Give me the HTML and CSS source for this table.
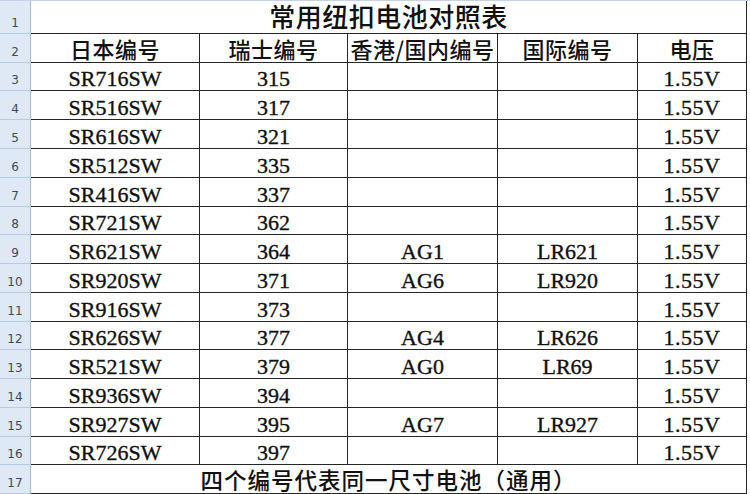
FILE: index.html
```html
<!DOCTYPE html>
<html lang="zh-CN">
<head>
<meta charset="utf-8">
<title>常用纽扣电池对照表</title>
<link rel="stylesheet" href="styles.css">
</head>
<body>
<div class="sheet">
  <div class="grid">
    <div class="rh">1</div>
    <div class="cell title wide">常用纽扣电池对照表</div>

    <div class="rh">2</div>
    <div class="cell hd">日本编号</div>
    <div class="cell hd">瑞士编号</div>
    <div class="cell hd">香港/国内编号</div>
    <div class="cell hd">国际编号</div>
    <div class="cell hd">电压</div>

    <div class="rh">3</div>
    <div class="cell">SR716SW</div><div class="cell">315</div><div class="cell"></div><div class="cell"></div><div class="cell v">1.55V</div>
    <div class="rh">4</div>
    <div class="cell">SR516SW</div><div class="cell">317</div><div class="cell"></div><div class="cell"></div><div class="cell v">1.55V</div>
    <div class="rh">5</div>
    <div class="cell">SR616SW</div><div class="cell">321</div><div class="cell"></div><div class="cell"></div><div class="cell v">1.55V</div>
    <div class="rh">6</div>
    <div class="cell">SR512SW</div><div class="cell">335</div><div class="cell"></div><div class="cell"></div><div class="cell v">1.55V</div>
    <div class="rh">7</div>
    <div class="cell">SR416SW</div><div class="cell">337</div><div class="cell"></div><div class="cell"></div><div class="cell v">1.55V</div>
    <div class="rh">8</div>
    <div class="cell">SR721SW</div><div class="cell">362</div><div class="cell"></div><div class="cell"></div><div class="cell v">1.55V</div>
    <div class="rh">9</div>
    <div class="cell">SR621SW</div><div class="cell">364</div><div class="cell">AG1</div><div class="cell">LR621</div><div class="cell v">1.55V</div>
    <div class="rh">10</div>
    <div class="cell">SR920SW</div><div class="cell">371</div><div class="cell">AG6</div><div class="cell">LR920</div><div class="cell v">1.55V</div>
    <div class="rh">11</div>
    <div class="cell">SR916SW</div><div class="cell">373</div><div class="cell"></div><div class="cell"></div><div class="cell v">1.55V</div>
    <div class="rh">12</div>
    <div class="cell">SR626SW</div><div class="cell">377</div><div class="cell">AG4</div><div class="cell">LR626</div><div class="cell v">1.55V</div>
    <div class="rh">13</div>
    <div class="cell">SR521SW</div><div class="cell">379</div><div class="cell">AG0</div><div class="cell">LR69</div><div class="cell v">1.55V</div>
    <div class="rh">14</div>
    <div class="cell">SR936SW</div><div class="cell">394</div><div class="cell"></div><div class="cell"></div><div class="cell v">1.55V</div>
    <div class="rh">15</div>
    <div class="cell">SR927SW</div><div class="cell">395</div><div class="cell">AG7</div><div class="cell">LR927</div><div class="cell v">1.55V</div>
    <div class="rh">16</div>
    <div class="cell">SR726SW</div><div class="cell">397</div><div class="cell"></div><div class="cell"></div><div class="cell v">1.55V</div>

    <div class="rh">17</div>
    <div class="cell foot wide">四个编号代表同一尺寸电池（通用）</div>
  </div>
</div>
</body>
</html>
```

FILE: styles.css
```css
html, body {
  margin: 0;
  padding: 0;
  background: #ffffff;
}

.sheet {
  width: 750px;
  height: 494px;
  box-sizing: border-box;
  border-top: 1px solid #c3d2e6;
  overflow: hidden;
}

.grid {
  display: grid;
  grid-template-columns: 31px 169px 148px 150px 140px 109px;
  grid-template-rows: 33px 29px 28px 29px 29px 29px 29px 28px 29px 29px 29px 28px 29px 29px 29px 28px 29px;
}

.rh {
  box-sizing: border-box;
  background: #dfe8f5;
  border-right: 1px solid #a7bcd6;
  border-bottom: 1px solid #b9cbe2;
  display: flex;
  align-items: flex-end;
  justify-content: center;
  padding-bottom: 4px;
  font-family: "DejaVu Sans", "Liberation Sans", sans-serif;
  font-size: 12px;
  line-height: 1;
  color: #3f4a57;
}

.cell {
  box-sizing: border-box;
  border-right: 1px solid #262626;
  border-bottom: 1px solid #262626;
  display: flex;
  align-items: flex-end;
  justify-content: center;
  white-space: nowrap;
  font-family: "Liberation Serif", "Noto Sans CJK SC", serif;
  font-size: 22px;
  line-height: 1;
  color: #111111;
  -webkit-text-stroke: 0.35px #111111;
}

.wide {
  grid-column: span 5;
}

.v {
  letter-spacing: 0.5px;
}

.title,
.hd,
.foot {
  font-family: "Noto Sans CJK SC", sans-serif;
  -webkit-text-stroke: 0;
  font-weight: 500;
}

.title {
  font-size: 26px;
  letter-spacing: 0.5px;
  padding-bottom: 4px;
}

.hd {
  font-size: 22px;
  letter-spacing: 0.5px;
  padding-bottom: 3px;
}

.foot {
  font-size: 22.5px;
  letter-spacing: 1px;
  padding-bottom: 3px;
}
```
